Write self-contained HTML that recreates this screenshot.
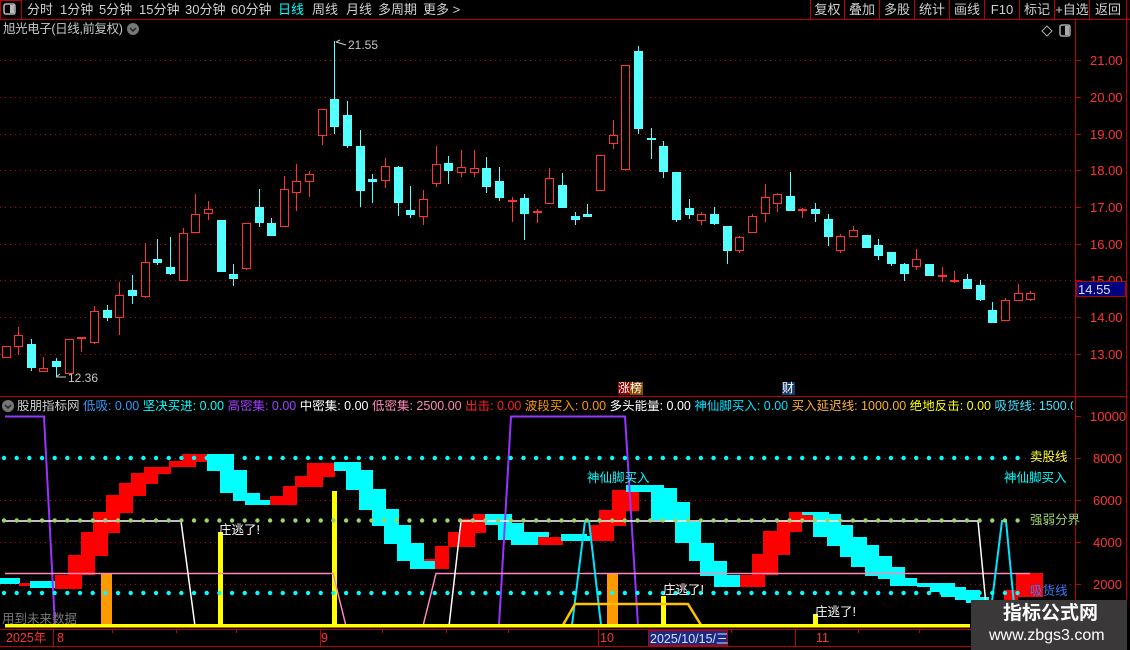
<!DOCTYPE html>
<html><head><meta charset="utf-8">
<style>
*{margin:0;padding:0;box-sizing:border-box}
body{width:1130px;height:650px;background:#000;overflow:hidden;position:relative;font-family:"Liberation Sans","Noto Sans CJK SC",sans-serif;font-size:13px;color:#c8c8c8}
.a{position:absolute;white-space:nowrap;line-height:1}
.tb span{position:absolute;top:3px}
.btn{position:absolute;top:0;height:20px;border-left:1px solid #c00000;color:#d0d0d0;text-align:center;line-height:19px;font-size:13px}
</style></head><body>
<svg width="1130" height="650" style="position:absolute;left:0;top:0" id="sv">
<line x1="0" y1="19.5" x2="1130" y2="19.5" stroke="#c00000"/>
<rect x="0.5" y="0.5" width="21" height="19" fill="none" stroke="#c00000"/>
<rect x="4" y="4" width="11" height="10" rx="2" fill="none" stroke="#bbb" stroke-width="1.5"/><rect x="10" y="5" width="4" height="8" fill="#bbb"/>
<line x1="1126.5" y1="0" x2="1126.5" y2="650" stroke="#c00000"/>
<line x1="1075.5" y1="20" x2="1075.5" y2="630" stroke="#c00000"/>
<line x1="0" y1="396.5" x2="1126" y2="396.5" stroke="#c00000"/>
<line x1="0" y1="629.5" x2="1126" y2="629.5" stroke="#c00000"/>
<line x1="0" y1="646.5" x2="1126" y2="646.5" stroke="#c00000"/>
<path d="M1047 26 L1052 31 L1047 36 L1042 31Z" fill="none" stroke="#aaa"/>
<rect x="1060" y="25" width="10" height="11" rx="2" fill="none" stroke="#aaa" stroke-width="1.5"/><rect x="1065" y="26" width="4" height="9" fill="#aaa"/>
<circle cx="133" cy="29" r="6" fill="#777"/><path d="M130 28 L133 31 L136 28" stroke="#222" stroke-width="1.5" fill="none"/>
<circle cx="8" cy="406" r="6" fill="#777"/><path d="M5 405 L8 408 L11 405" stroke="#222" stroke-width="1.5" fill="none"/>
<g id="g"></g>
</svg>

<div class="tb a" style="left:0;top:0;width:600px;height:20px;color:#d0d0d0">
<span style="left:27px">分时</span><span style="left:60px">1分钟</span><span style="left:99px">5分钟</span><span style="left:139px">15分钟</span><span style="left:185px">30分钟</span><span style="left:231px">60分钟</span><span style="left:278px;color:#00ffff">日线</span><span style="left:312px">周线</span><span style="left:346px">月线</span><span style="left:378px">多周期</span><span style="left:423px">更多 &gt;</span>
</div>
<div class="btn" style="left:810px;width:34px">复权</div>
<div class="btn" style="left:844px;width:35px">叠加</div>
<div class="btn" style="left:879px;width:35px">多股</div>
<div class="btn" style="left:914px;width:35px">统计</div>
<div class="btn" style="left:949px;width:35px">画线</div>
<div class="btn" style="left:984px;width:35px">F10</div>
<div class="btn" style="left:1019px;width:35px">标记</div>
<div class="btn" style="left:1054px;width:35px">+自选</div>
<div class="btn" style="left:1089px;width:37px">返回</div>

<div class="a" style="left:3px;top:23px;color:#c8c8c8;font-size:12.5px;letter-spacing:-0.4px">旭光电子(日线,前复权)</div>
<div class="a" style="left:348px;top:39px;color:#c8c8c8;font-size:12px">21.55</div>
<div class="a" style="left:68px;top:372px;color:#c8c8c8;font-size:12px">12.36</div>

<div class="a" style="left:618px;top:382px;width:12px;height:13px;background:#8b0000;color:#fff;font-size:12px">涨</div>
<div class="a" style="left:630px;top:382px;width:13px;height:13px;background:#8b4a00;color:#fff;font-size:12px">榜</div>
<div class="a" style="left:782px;top:382px;width:13px;height:13px;background:#1a3a6a;color:#fff;font-size:12px">财</div>

<div class="a" style="left:1090px;top:54px;color:#ff3333">21.00</div>
<div class="a" style="left:1090px;top:91px;color:#ff3333">20.00</div>
<div class="a" style="left:1090px;top:128px;color:#ff3333">19.00</div>
<div class="a" style="left:1090px;top:164px;color:#ff3333">18.00</div>
<div class="a" style="left:1090px;top:201px;color:#ff3333">17.00</div>
<div class="a" style="left:1090px;top:238px;color:#ff3333">16.00</div>
<div class="a" style="left:1090px;top:274px;color:#ff3333">15.00</div>
<div class="a" style="left:1090px;top:311px;color:#ff3333">14.00</div>
<div class="a" style="left:1090px;top:348px;color:#ff3333">13.00</div>
<div class="a" style="left:1076px;top:281px;width:50px;height:16px;background:#000080;border:1px solid #c00000;color:#e0e0e0;padding:1px 0 0 1px">14.55</div>

<div class="a" style="left:1090px;top:410px;color:#ff3333">10000</div>
<div class="a" style="left:1093px;top:452px;color:#ff3333">8000</div>
<div class="a" style="left:1093px;top:494px;color:#ff3333">6000</div>
<div class="a" style="left:1093px;top:536px;color:#ff3333">4000</div>
<div class="a" style="left:1093px;top:578px;color:#ff3333">2000</div>

<div class="a" style="left:17px;top:400px;font-size:12.5px;width:1056px;overflow:hidden"><span style="color:#d0d0d0">股朋指标网 </span><span style="color:#2e9bff">低吸: 0.00 </span><span style="color:#00ffff">坚决买进: 0.00 </span><span style="color:#a040ff">高密集: 0.00 </span><span style="color:#fff">中密集: 0.00 </span><span style="color:#ff88bb">低密集: 2500.00 </span><span style="color:#ff2020">出击: 0.00 </span><span style="color:#ff9900">波段买入: 0.00 </span><span style="color:#fff">多头能量: 0.00 </span><span style="color:#00e0ff">神仙脚买入: 0.00 </span><span style="color:#ffb030">买入延迟线: 1000.00 </span><span style="color:#ffff00">绝地反击: 0.00 </span><span style="color:#40e0ff">吸货线: 1500.00 </span><span style="color:#9ad46a">强</span></div>

<div class="a" style="left:219px;top:524px;color:#fff;font-size:12.5px">庄逃了!</div>
<div class="a" style="left:663px;top:584px;color:#fff;font-size:12.5px">庄逃了!</div>
<div class="a" style="left:815px;top:606px;color:#fff;font-size:12.5px">庄逃了!</div>
<div class="a" style="left:587px;top:472px;color:#00ffff;font-size:12.5px">神仙脚买入</div>
<div class="a" style="left:1004px;top:472px;color:#00ffff;font-size:12.5px">神仙脚买入</div>
<div class="a" style="left:1030px;top:451px;color:#ffff33;font-size:12.5px">卖股线</div>
<div class="a" style="left:1030px;top:514px;color:#9ad46a;font-size:12.5px">强弱分界</div>
<div class="a" style="left:1030px;top:585px;color:#2e7fff;font-size:12.5px">吸货线</div>
<div class="a" style="left:2px;top:613px;color:#777;font-size:12.5px">用到未来数据</div>

<div class="a" style="left:6px;top:632px;color:#ff3333;font-size:12.5px">2025年</div>
<div class="a" style="left:57px;top:632px;color:#ff3333;font-size:12.5px">8</div>
<div class="a" style="left:321px;top:632px;color:#ff3333;font-size:12.5px">9</div>
<div class="a" style="left:600px;top:632px;color:#ff3333;font-size:12.5px">10</div>
<div class="a" style="left:648px;top:630px;width:80px;height:16px;background:#1a2a8a;border:1px solid #c00000;color:#e0e0e0;font-size:12.5px;padding:2px 0 0 1px">2025/10/15/三</div>
<div class="a" style="left:816px;top:632px;color:#ff3333;font-size:12.5px">11</div>

<div class="a" style="left:971px;top:600px;width:156px;height:50px;background:#3a3838"></div>
<div class="a" style="left:1003px;top:604px;color:#fff;font-size:19px;font-weight:bold">指标公式网</div>
<div class="a" style="left:989px;top:628px;color:#fff;font-size:16px">www.zbgs3.com</div>

<script>
var g=document.getElementById('g'),h='';
function L(x1,y1,x2,y2,c,w,d){h+='<line x1="'+x1+'" y1="'+y1+'" x2="'+x2+'" y2="'+y2+'" stroke="'+c+'" stroke-width="'+(w||1)+'"'+(d?' stroke-dasharray="'+d+'"':'')+'/>';}
function R(x,y,w,hh,c){h+='<rect x="'+x+'" y="'+y+'" width="'+w+'" height="'+hh+'" fill="'+c+'"/>';}
[60,97,134,170,207,244,280,317,354].forEach(function(y){L(0,y+.5,1075,y+.5,'#c00000',1,'1 4');L(1075,y+.5,1081,y+.5,'#c00000');});
[458,500,542,584].forEach(function(y){L(0,y+.5,1075,y+.5,'#c00000',1,'1 4');L(1075,y+.5,1081,y+.5,'#c00000');});
[416].forEach(function(y){L(1075,y+.5,1081,y+.5,'#c00000');});
var C=[['r',346,357,346,357],['r',335,346,327,355],['c',344,367,339,371],['r',368,371,357,371],['c',361,366,358,377],['r',339,373,339,375],['r',337,339,337,352],['r',311,342,306,344],['c',310,317,305,321],['r',295,317,282,335],['c',290,295,275,304],['r',262,296,243,298],['c',259,262,239,265],['c',267,273,237,275],['r',233,280,228,281],['r',214,232,194,233],['r',209,213,201,220],['c',220,271,220,271],['c',274,278,264,286],['r',223,268,223,270],['c',207,222,189,227],['c',223,235,218,236],['r',189,226,176,226],['r',181,192,164,211],['r',174,181,171,197],['r',109,135,109,145],['c',99,126,41,134],['c',115,145,101,148],['c',146,190,130,207],['c',179,181,174,203],['r',166,180,158,188],['c',167,202,166,216],['c',210,214,186,218],['r',199,216,190,225],['r',164,183,146,187],['c',163,170,156,184],['r',167,172,150,177],['r',168,172,150,177],['c',168,186,157,193],['c',181,197,167,201],['r',200,201,197,222],['c',198,213,194,240],
['r',211,213,209,223],['r',178,203,168,203],['c',185,207,173,207],['c',216,219,212,225],['c',214,216,204,217],['r',155,190,155,190],['r',135,143,120,149],['r',65,169,65,169],['c',51,128,46,134],['c',138,139,128,159],['c',146,171,141,178],['c',172,219,172,222],['c',208,214,199,219],['r',214,220,212,225],['c',214,223,207,225],['c',226,250,226,264],['r',237,250,236,253],['r',216,232,214,233],['r',197,213,184,222],['r',194,203,193,212],['c',196,210,172,211],['r',209,211,208,218],['c',209,213,203,222],['c',219,236,214,246],['r',236,250,234,253],['r',230,236,226,236],['c',235,247,235,247],['c',245,255,239,260],['c',252,263,252,266],['c',264,273,263,281],['r',259,266,249,270],['c',264,275,264,275],['r',275,276,267,282],['r',280,281,271,283],['c',279,288,274,289],['c',285,299,280,301],['c',310,322,302,323],['r',300,320,298,320],['r',293,300,284,300],['r',293,299,291,301]];
C.forEach(function(k,i){var x=Math.round(5.5+i*12.65)+.5;var col=k[0]=='r'?'#ff3232':'#54ffff';
L(x,k[3],x,k[4],col);
var bh=Math.max(k[2]-k[1],1);
if(k[0]=='c')R(x-4.5,k[1],9,bh+1,col);else{if(bh<=2)R(x-4.5,k[1],9,2,col);else h+='<rect x="'+(x-4)+'" y="'+(k[1]+.5)+'" width="8" height="'+bh+'" fill="#000" stroke="'+col+'"/>';}});
h+='<path d="M336 42 L346 45 M336 42 L340 40" stroke="#ccc" fill="none"/>';
h+='<path d="M56 377 L66 377 M56 377 L60 374" stroke="#ccc" fill="none"/>';
var RC='#00ffff',RR='#ff0000';
var B=[[0,20,578,584,RC],[19,30,583,586,RR],[30,55,581,588,RC],[55,82,575,589,RR],[68,95,555,575,RR],[81,108,532,556,RR],[93,120,512,533,RR],[106,133,495,513,RR],[119,146,483,496,RR],[131,158,473,484,RR],[144,171,467,474,RR],[169,196,461,467,RR],[182,207,454,462,RR],[207,234,454,471,RC],[220,247,470,493,RC],[233,260,493,501,RC],[245,272,500,505,RC],[258,285,500,504,RC],[270,297,496,505,RR],[283,297,486,497,RR],[295,323,476,487,RR],[307,335,463,477,RR],[334,361,462,471,RC],[346,373,470,490,RC],[359,386,489,510,RC],[372,399,509,526,RC],[384,411,525,544,RC],[397,424,543,561,RC],[410,437,560,569,RC],[424,437,559,561,RR],[435,449,546,569,RR],[448,475,532,547,RR],[461,486,519,533,RR],[473,486,514,520,RR],[485,512,514,525,RC],[498,524,523,540,RC],[511,549,532,545,RC],[538,563,537,545,RR],[561,587,534,541,RC],[574,601,536,541,RC],[590,614,525,541,RR],[599,626,510,526,RR],[612,639,490,511,RR],[626,664,485,492,RC],[651,677,488,520,RC],[664,690,502,522,RC],[675,701,522,543,RC],[689,714,543,561,RC],[700,727,561,576,RC],[714,740,575,587,RC],[740,765,575,587,RR],[752,778,554,575,RR],[763,790,531,555,RR],[777,802,520,532,RR],[789,815,512,520,RR],[802,829,512,520,RC],[802,815,515,520,RR],[813,841,514,537,RC],[827,853,525,546,RC],[840,867,537,557,RC],[851,879,545,567,RC],[865,892,556,576,RC],[878,905,567,579,RC],[890,917,578,586,RC],[905,930,583,586,RC],[917,941,583,587,RC],[930,955,583,592,RC],[941,966,587,597,RC],[955,980,590,600,RC],[966,989,597,603,RC],[1004,1018,590,603,RR],[1016,1043,573,597,RR]];
B.forEach(function(b){R(b[0],b[2],b[1]-b[0],b[3]-b[2],b[4]);});
R(101,573,11,53,'#ff9900');R(607,573,11,53,'#ff9900');
R(218,532,5,92,'#ffff00');R(332,491,5,133,'#ffff00');R(661,596,5,28,'#ffff00');R(813,614,5,10,'#ffff00');
h+='<polyline points="5,416.5 44,416.5 55,626" stroke="#9933ff" stroke-width="2" fill="none"/>';
h+='<polyline points="499,626 511,416.5 625,416.5 638,626" stroke="#9933ff" stroke-width="2" fill="none"/>';
h+='<polyline points="5,573.5 333,573.5 346,626" stroke="#ff88bb" stroke-width="1.5" fill="none"/>';
h+='<polyline points="423,626 436,573.5 1030,573.5" stroke="#ff88bb" stroke-width="1.5" fill="none"/>';
h+='<polyline points="5,521 181,521 195,626" stroke="#fff" stroke-width="1.5" fill="none"/>';
h+='<polyline points="449,626 461,521 978,521 988,626" stroke="#fff" stroke-width="1.5" fill="none"/>';
h+='<polyline points="572,625 585,521 589,521 601,625" stroke="#00e5ff" stroke-width="2" fill="none"/>';
h+='<polyline points="989,625 1002,521 1006,521 1016,625" stroke="#00e5ff" stroke-width="2" fill="none"/>';
h+='<polyline points="563,625 575,604 688,604 701,625" stroke="#ffc000" stroke-width="2.5" fill="none"/>';
for(var i=0;i<81;i++){var x=4+i*12.67;h+='<circle cx="'+x+'" cy="458" r="2.2" fill="#00ffff"/><circle cx="'+x+'" cy="593" r="2.2" fill="#00ffff"/><circle cx="'+x+'" cy="520.5" r="2.2" fill="#9ad46a"/>';}
R(5,624,965,3.5,'#ffff00');
[53,320,598,795].forEach(function(x){L(x+.5,630,x+.5,646,'#c00000');});
[112,176,236,382,446,508,665,731,858,919,985,1047].forEach(function(x){L(x+.5,630,x+.5,633,'#c00000');});
g.innerHTML=h;
</script>
</body></html>
